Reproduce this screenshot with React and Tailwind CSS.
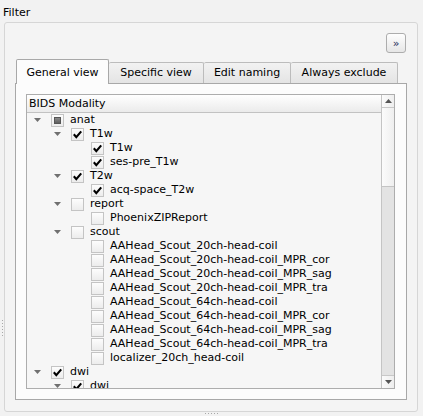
import React from "react";

const rows = [
  { label: "anat", level: 0, branch: true, state: "partial" },
  { label: "T1w", level: 1, branch: true, state: "checked" },
  { label: "T1w", level: 2, state: "checked" },
  { label: "ses-pre_T1w", level: 2, state: "checked" },
  { label: "T2w", level: 1, branch: true, state: "checked" },
  { label: "acq-space_T2w", level: 2, state: "checked" },
  { label: "report", level: 1, branch: true, state: "off" },
  { label: "PhoenixZIPReport", level: 2, state: "off" },
  { label: "scout", level: 1, branch: true, state: "off" },
  { label: "AAHead_Scout_20ch-head-coil", level: 2, state: "off" },
  { label: "AAHead_Scout_20ch-head-coil_MPR_cor", level: 2, state: "off" },
  { label: "AAHead_Scout_20ch-head-coil_MPR_sag", level: 2, state: "off" },
  { label: "AAHead_Scout_20ch-head-coil_MPR_tra", level: 2, state: "off" },
  { label: "AAHead_Scout_64ch-head-coil", level: 2, state: "off" },
  { label: "AAHead_Scout_64ch-head-coil_MPR_cor", level: 2, state: "off" },
  { label: "AAHead_Scout_64ch-head-coil_MPR_sag", level: 2, state: "off" },
  { label: "AAHead_Scout_64ch-head-coil_MPR_tra", level: 2, state: "off" },
  { label: "localizer_20ch_head-coil", level: 2, state: "off" },
  { label: "dwi", level: 0, branch: true, state: "checked" },
  { label: "dwi", level: 1, branch: true, state: "checked" },
];

const indent = ["pl-0", "pl-[20px]", "pl-[40px]"];

const tabs = [
  { label: "General view", w: "w-[93px]", active: true },
  { label: "Specific view", w: "w-[95px]" },
  { label: "Edit naming", w: "w-[87px]" },
  { label: "Always exclude", w: "w-[107px]" },
];

function Check({ state }) {
  return (
    <div className="w-[13px] h-[13px] shrink-0 border border-[#c4c4c4] bg-gradient-to-b from-[#fdfdfd] to-[#ececec] flex items-center justify-center">
      {state === "checked" && (
        <svg width="11" height="11" viewBox="0 0 11 11">
          <path d="M1.8 5.3 L4.3 8.2 L9.2 2.3" fill="none" stroke="#000" strokeWidth="2.1" />
        </svg>
      )}
      {state === "partial" && (
        <div className="w-[7px] h-[7px] bg-gradient-to-b from-[#8a8a8a] to-[#5e5e5e] border border-[#555]" />
      )}
    </div>
  );
}

function Arrow({ down = true, color = "#707070" }) {
  return (
    <svg width="7" height="4" viewBox="0 0 7 4">
      <path d={down ? "M0 0 H7 L3.5 4 Z" : "M0 4 H7 L3.5 0 Z"} fill={color} />
    </svg>
  );
}

export default function App() {
  return (
    <div
      className="relative w-[423px] h-[416px] bg-[#f2f2f2] text-[11px] text-black overflow-hidden"
      style={{ fontFamily: '"DejaVu Sans", sans-serif' }}
    >
      <div className="h-[22px] pt-[6px] pl-[3px] leading-[13px]">Filter</div>

      {/* group box */}
      <div className="ml-[4px] w-[414px] h-[390px] border border-[#d6d6d6] rounded-[3px] bg-[#f4f4f4] px-[10px] pt-[10px]">
        <div className="flex justify-end pr-[1px]">
          <button className="w-[20px] h-[20px] border border-[#adadad] rounded-[3px] bg-gradient-to-b from-[#fefefe] to-[#e6e6e6] text-[#1f2f5a] text-[11px] leading-[17px]">
            »
          </button>
        </div>

        {/* tabs */}
        <div className="mt-[6px] h-[24px] flex items-end pl-[1px]">
          {tabs.map((t) =>
            t.active ? (
              <div
                key={t.label}
                className={`${t.w} h-[25px] -mb-[1px] relative z-10 border border-b-0 border-[#a8a8a8] rounded-t-[2px] bg-[#fcfcfc] text-center leading-[22px] pt-[2px]`}
              >
                {t.label}
              </div>
            ) : (
              <div
                key={t.label}
                className={`${t.w} h-[21px] border border-b-0 border-l-0 border-[#bcbcbc] rounded-t-[2px] bg-gradient-to-b from-[#f2f2f2] to-[#e4e4e4] text-center leading-[20px]`}
              >
                {t.label}
              </div>
            )
          )}
        </div>

        {/* tab pane */}
        <div className="w-[392px] h-[317px] border border-[#a8a8a8] bg-[#fcfcfc] pl-[10px] pt-[10px]">
          <div className="w-[369px] h-[295px] border border-[#adadad] bg-[#f6f6f6] flex">
            <div className="flex-1 overflow-hidden">
              <div className="h-[18px] border-b border-[#c2c2c2] bg-gradient-to-b from-[#ffffff] to-[#ebebeb] pl-[2px] leading-[17px]">
                BIDS Modality
              </div>
              {rows.map((r, i) => (
                <div key={i} className={`h-[14px] flex items-center ${indent[r.level]}`}>
                  <div className="w-[20px] shrink-0 flex justify-center pl-[1px]">
                    {r.branch && <Arrow />}
                  </div>
                  <div className="ml-[4px]">
                    <Check state={r.state} />
                  </div>
                  <span className="ml-[6px] leading-[14px] whitespace-nowrap">{r.label}</span>
                </div>
              ))}
            </div>

            {/* scrollbar */}
            <div className="w-[13px] shrink-0 border-l border-[#c4c4c4] flex flex-col">
              <div className="h-[13px] border-b border-[#c8c8c8] bg-gradient-to-r from-[#fbfbfb] to-[#eeeeee] flex items-center justify-center">
                <Arrow down={false} color="#555" />
              </div>
              <div className="h-[79px] border-b border-[#c4c4c4] bg-gradient-to-r from-[#fbfbfb] to-[#efefef]" />
              <div className="flex-1 bg-[#e3e3e3]" />
              <div className="h-[13px] border-t border-[#c8c8c8] bg-gradient-to-r from-[#fbfbfb] to-[#eeeeee] flex items-center justify-center">
                <Arrow color="#555" />
              </div>
            </div>
          </div>
        </div>
      </div>

      {/* splitter handles */}
      <div className="absolute left-[2px] top-[320px] flex flex-col gap-[2px]">
        {[0, 1, 2, 3, 4, 5].map((k) => (
          <div key={k} className="w-[1px] h-[1px] bg-[#a8a8a8]" />
        ))}
      </div>
      <div className="absolute left-[205px] top-[413px] flex gap-[2px]">
        {[0, 1, 2, 3, 4].map((k) => (
          <div key={k} className="w-[1px] h-[1px] bg-[#a8a8a8]" />
        ))}
      </div>
    </div>
  );
}
